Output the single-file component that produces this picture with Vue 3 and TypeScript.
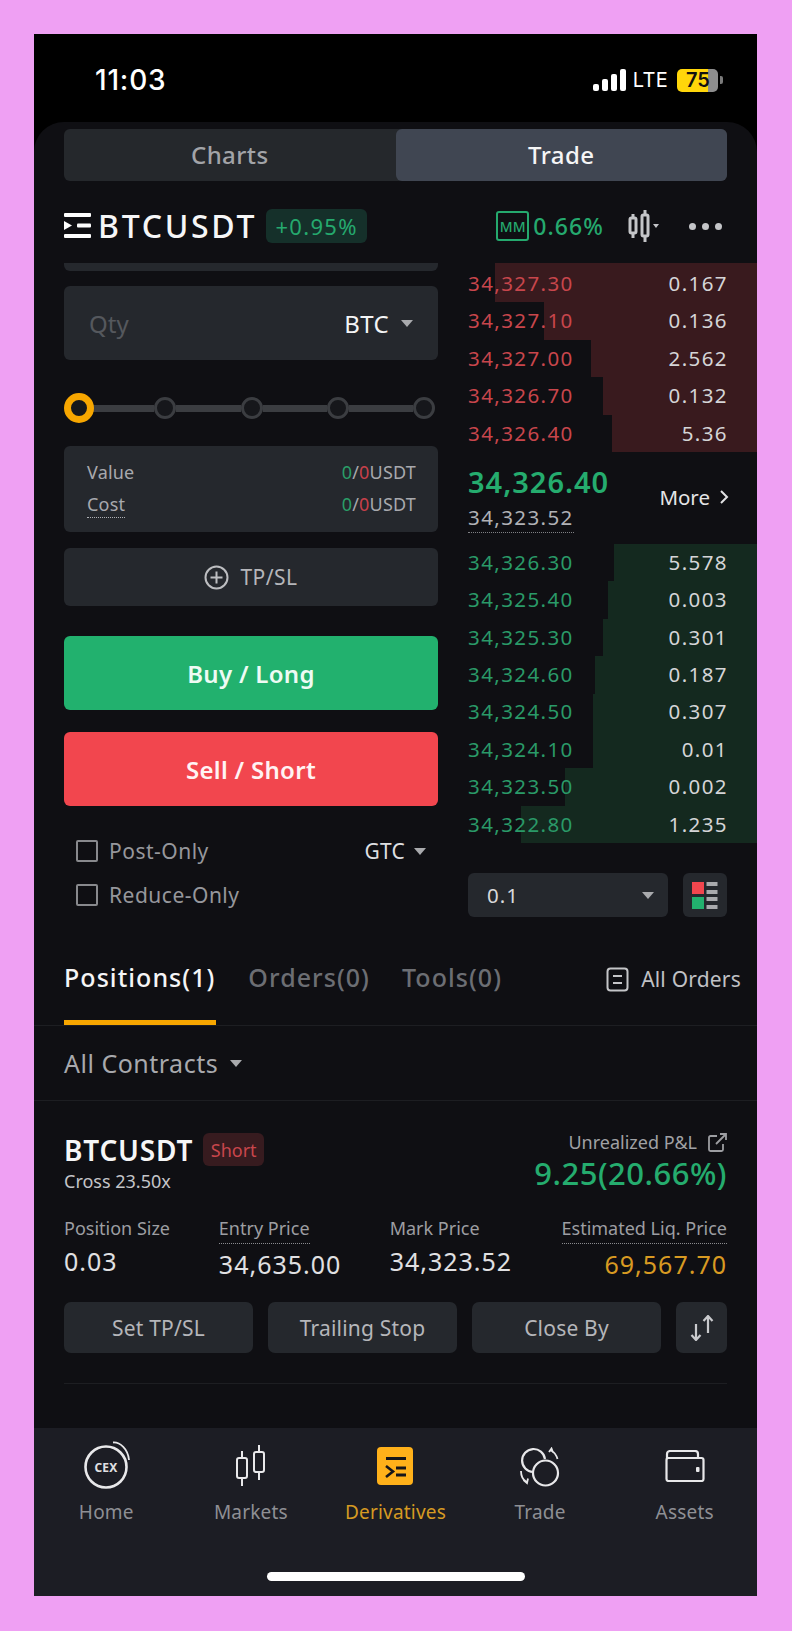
<script setup lang="ts">
interface Row { price: string; qty: string; bar: number }
const asks: Row[] = [
  { price: '34,327.30', qty: '0.167', bar: 262 },
  { price: '34,327.10', qty: '0.136', bar: 213 },
  { price: '34,327.00', qty: '2.562', bar: 166 },
  { price: '34,326.70', qty: '0.132', bar: 154 },
  { price: '34,326.40', qty: '5.36', bar: 145 },
]
const bids: Row[] = [
  { price: '34,326.30', qty: '5.578', bar: 143 },
  { price: '34,325.40', qty: '0.003', bar: 149 },
  { price: '34,325.30', qty: '0.301', bar: 154 },
  { price: '34,324.60', qty: '0.187', bar: 162 },
  { price: '34,324.50', qty: '0.307', bar: 164 },
  { price: '34,324.10', qty: '0.01', bar: 164 },
  { price: '34,323.50', qty: '0.002', bar: 192 },
  { price: '34,322.80', qty: '1.235', bar: 236 },
]
const stops = [0, 1, 2, 3]
</script>

<template>
  <div class="page">
    <div class="frame">
      <div class="status">
        <span class="time">11:03</span>
        <div class="status-right">
          <div class="signal"><i class="b1"></i><i class="b2"></i><i class="b3"></i><i class="b4"></i></div>
          <span class="lte">LTE</span>
          <div class="battery"><span>75</span></div>
          <i class="nub"></i>
        </div>
      </div>

      <div class="panel">
        <div class="seg">
          <div class="seg-item">Charts</div>
          <div class="seg-item on">Trade</div>
        </div>

        <div class="head">
          <svg class="menu" width="28" height="26" viewBox="0 0 28 26">
            <rect x="0" y="0" width="27" height="4" rx="1" fill="#fff" />
            <rect x="0" y="21" width="27" height="4" rx="1" fill="#fff" />
            <rect x="13" y="10.5" width="14" height="4" rx="1" fill="#fff" />
            <path d="M0 8 L8 12.5 L0 17 Z" fill="#fff" />
          </svg>
          <span class="symbol">BTCUSDT</span>
          <span class="change">+0.95%</span>
          <div class="head-right">
            <span class="mm">MM</span>
            <span class="mm-val">0.66%</span>
            <svg class="candles" width="34" height="32" viewBox="0 0 34 32">
              <g fill="none" stroke="#c4c5c8" stroke-width="3">
                <rect x="2" y="8" width="6" height="15" rx="1.5" />
                <path d="M5 4v4M5 23v5" />
                <rect x="14" y="5" width="6" height="21" rx="1.5" />
                <path d="M17 0v5M17 26v6" />
              </g>
              <path d="M25 14h6l-3 4z" fill="#c4c5c8" />
            </svg>
            <div class="dots"><i></i><i></i><i></i></div>
          </div>
        </div>

        <div class="trade">
          <div class="form">
            <div class="stub"></div>
            <div class="qty">
              <span class="qty-ph">Qty</span>
              <span class="qty-unit">BTC<i class="caret"></i></span>
            </div>
            <div class="slider">
              <span class="knob"></span>
              <template v-for="s in stops" :key="s">
                <span class="track"></span>
                <span class="stop"></span>
              </template>
            </div>
            <div class="info">
              <div class="info-row">
                <span>Value</span>
                <span><em class="g">0</em>/<em class="r">0</em>USDT</span>
              </div>
              <div class="info-row">
                <span class="dotted">Cost</span>
                <span><em class="g">0</em>/<em class="r">0</em>USDT</span>
              </div>
            </div>
            <div class="tpsl">
              <svg width="25" height="25" viewBox="0 0 25 25" fill="none" stroke="#bdbec1" stroke-width="2">
                <circle cx="12.5" cy="12.5" r="11" />
                <path d="M12.5 6.5v12M6.5 12.5h12" />
              </svg>
              <span>TP/SL</span>
            </div>
            <div class="action buy">Buy / Long</div>
            <div class="action sell">Sell / Short</div>
            <div class="checks">
              <div class="check-row">
                <i class="box"></i><span>Post-Only</span>
                <span class="gtc">GTC<i class="caret"></i></span>
              </div>
              <div class="check-row">
                <i class="box"></i><span>Reduce-Only</span>
              </div>
            </div>
          </div>

          <div class="book">
            <div v-for="r in asks" :key="r.price" class="row ask">
              <i class="bar" :style="{ width: r.bar + 'px' }"></i>
              <span class="price">{{ r.price }}</span>
              <span class="size">{{ r.qty }}</span>
            </div>
            <div class="mid">
              <div class="mid-left">
                <div class="last">34,326.40</div>
                <div class="mark">34,323.52</div>
              </div>
              <div class="more">
                More
                <svg width="10" height="16" viewBox="0 0 10 16" fill="none" stroke="#e2e2e4" stroke-width="2">
                  <path d="M2 2l6 6-6 6" />
                </svg>
              </div>
            </div>
            <div v-for="r in bids" :key="r.price" class="row bid">
              <i class="bar" :style="{ width: r.bar + 'px' }"></i>
              <span class="price">{{ r.price }}</span>
              <span class="size">{{ r.qty }}</span>
            </div>
            <div class="book-tools">
              <div class="depth">
                <span>0.1</span>
                <i class="caret"></i>
              </div>
              <div class="layout-btn">
                <svg width="26" height="27" viewBox="0 0 26 27">
                  <rect x="0" y="0" width="12" height="12" fill="#f2464e" />
                  <rect x="0" y="15" width="12" height="12" fill="#22b16e" />
                  <g fill="#a9aaad">
                    <rect x="14.500" y="0" width="11" height="4" />
                    <rect x="14.500" y="8" width="11" height="4" />
                    <rect x="14.500" y="15" width="11" height="4" />
                    <rect x="14.500" y="23" width="11" height="4" />
                  </g>
                </svg>
              </div>
            </div>
          </div>
        </div>

        <div class="tabs">
          <div class="tab on">Positions(1)</div>
          <div class="tab">Orders(0)</div>
          <div class="tab">Tools(0)</div>
          <div class="all-orders">
            <svg width="23" height="25" viewBox="0 0 23 25" fill="none" stroke="#c4c5c8" stroke-width="2">
              <rect x="1.500" y="1.500" width="20" height="22" rx="3" />
              <path d="M7 9h9M7 16h9" />
            </svg>
            <span>All Orders</span>
          </div>
        </div>

        <div class="filter">All Contracts<i class="caret"></i></div>

        <div class="position">
          <div class="pos-top">
            <div>
              <div class="pos-name">
                <span class="pos-symbol">BTCUSDT</span>
                <span class="short">Short</span>
              </div>
              <div class="cross">Cross 23.50x</div>
            </div>
            <div class="pnl">
              <div class="pnl-label">
                <span>Unrealized P&amp;L</span>
                <svg width="19" height="19" viewBox="0 0 19 19" fill="none" stroke="#9d9ea2" stroke-width="1.800">
                  <path d="M9 3H2.500A1.500 1.500 0 0 0 1 4.500v12A1.500 1.500 0 0 0 2.500 18h11a1.500 1.500 0 0 0 1.500-1.500V11" />
                  <path d="M8 11L18 1M12 1h6v6" />
                </svg>
              </div>
              <div class="pnl-val">9.25(20.66%)</div>
            </div>
          </div>

          <div class="stats">
            <div class="stat s1">
              <span class="stat-label">Position Size</span>
              <span class="stat-val">0.03</span>
            </div>
            <div class="stat s2">
              <span class="stat-label dotted-s">Entry Price</span>
              <span class="stat-val">34,635.00</span>
            </div>
            <div class="stat s3">
              <span class="stat-label">Mark Price</span>
              <span class="stat-val">34,323.52</span>
            </div>
            <div class="stat s4">
              <span class="stat-label dotted-s">Estimated Liq. Price</span>
              <span class="stat-val orange">69,567.70</span>
            </div>
          </div>

          <div class="pos-actions">
            <div class="pa">Set TP/SL</div>
            <div class="pa">Trailing Stop</div>
            <div class="pa">Close By</div>
            <div class="pa swap">
              <svg width="24" height="26" viewBox="0 0 24 26" fill="none" stroke="#c9cacd" stroke-width="2.200">
                <path d="M6 9v16M1.500 20l4.500 5 4.500-5" />
                <path d="M18 18V1M13.500 6L18 1l4.500 5" />
              </svg>
            </div>
          </div>
          <div class="pos-line"></div>
        </div>

        <nav class="nav">
          <div class="nav-item">
            <div class="nav-icon">
              <svg width="52" height="48" viewBox="0 0 52 48" fill="none" stroke="#e8e8ea">
                <circle cx="26" cy="26" r="20.500" stroke-width="2.600" />
                <path d="M33 1.500C40 1 48 8 49 19" stroke-width="1.800" />
                <text x="26" y="31" text-anchor="middle" class="cex">CEX</text>
              </svg>
            </div>
            <span>Home</span>
          </div>
          <div class="nav-item">
            <div class="nav-icon ic-mk">
              <svg width="30" height="44" viewBox="0 0 30 44" fill="none" stroke="#e8e8ea" stroke-width="2">
                <rect x="1" y="14" width="10" height="20" rx="2" />
                <path d="M6 7v7M6 34v8" />
                <rect x="18" y="8" width="10" height="20" rx="2" />
                <path d="M23 1v7M23 28v8" />
              </svg>
            </div>
            <span>Markets</span>
          </div>
          <div class="nav-item active">
            <div class="nav-icon ic-de">
              <svg width="36" height="38" viewBox="0 0 36 38">
                <rect width="36" height="38" rx="4" fill="#ffb11a" />
                <g stroke="#16161a" stroke-width="3" fill="none">
                  <path d="M9 11.500h20" />
                  <path d="M9 19l7 5.500-7 5.500" stroke-width="2.600" />
                  <path d="M19 21h10M19 28h10" />
                </g>
              </svg>
            </div>
            <span>Derivatives</span>
          </div>
          <div class="nav-item">
            <div class="nav-icon ic-tr">
              <svg width="40" height="40" viewBox="0 0 40 40" fill="none" stroke="#e8e8ea" stroke-width="2.200">
                <circle cx="25.500" cy="26" r="12.500" />
                <path d="M13 25A11.500 11.500 0 1 1 25 12" />
                <path d="M1 24c0 5 2 9 5.500 11M3.500 33l3.500 3 1-4.500" stroke-width="1.800" />
                <path d="M31 3.500c3 1.500 5.500 5 6.500 8.500M29 5l2.500-3.500 1.500 4" stroke-width="1.800" />
              </svg>
            </div>
            <span>Trade</span>
          </div>
          <div class="nav-item">
            <div class="nav-icon ic-as">
              <svg width="40" height="32" viewBox="0 0 40 32" fill="none" stroke="#e8e8ea" stroke-width="2.200">
                <path d="M2 9V4a3 3 0 0 1 3-3h25a3 3 0 0 1 3 3v5" />
                <rect x="1.500" y="8" width="37" height="23" rx="2" />
                <rect x="31" y="17" width="3.500" height="5" rx="1" fill="#e8e8ea" stroke="none" />
              </svg>
            </div>
            <span>Assets</span>
          </div>
          <i class="home-bar"></i>
        </nav>
      </div>
    </div>
  </div>
</template>

<style>
html, body { margin: 0; background: #efa0f3; }
</style>

<style scoped>
.page {
  width: 792px;
  height: 1631px;
  box-sizing: border-box;
  padding: 34px 35px 35px 34px;
  background: #efa0f3;
  font-family: "Noto Sans", "Open Sans", sans-serif;
  overflow: hidden;
}
i, em { font-style: normal; display: inline-block; }
.frame {
  height: 1562px;
  background: #000;
  display: flex;
  flex-direction: column;
}
.status {
  height: 88px;
  flex: none;
  display: flex;
  align-items: center;
  justify-content: space-between;
  box-sizing: border-box;
  padding: 4px 34px 0 61px;
  color: #fff;
}
.time { font-family: Inter, sans-serif; font-size: 28px; font-weight: 500; letter-spacing: .8px; }
.status-right { display: flex; align-items: center; }
.signal { display: flex; align-items: flex-end; gap: 3px; height: 22px; margin-right: 7px; }
.signal i { width: 6px; background: #fff; border-radius: 2px; }
.b1 { height: 7px; }
.b2 { height: 12px; }
.b3 { height: 17px; }
.b4 { height: 22px; }
.lte { font-family: Inter, sans-serif; font-size: 20px; font-weight: 400; margin-right: 9px; letter-spacing: .3px; }
.battery {
  width: 41px;
  height: 23px;
  border-radius: 5px;
  background: linear-gradient(90deg, #ffd60a 0 31px, #8e8e8e 31px);
  color: #111;
  font-family: Inter, sans-serif;
  font-size: 20px;
  font-weight: 600;
  line-height: 23px;
  box-sizing: border-box;
  padding-left: 9px;
}
.nub { width: 3px; height: 8px; background: #7a7a7a; border-radius: 0 2px 2px 0; margin-left: 2px; }

.panel {
  flex: 1;
  display: flex;
  flex-direction: column;
  background: #0f0f13;
  border-radius: 30px 30px 0 0;
  padding-top: 7px;
  min-height: 0;
}
.seg {
  display: flex;
  height: 52px;
  margin: 0 30px;
  background: #25282c;
  border-radius: 6px;
  flex: none;
}
.seg-item {
  flex: 1;
  display: flex;
  align-items: center;
  justify-content: center;
  font-size: 24px;
  font-weight: 500;
  letter-spacing: .4px;
  color: #a2a4a8;
  border-radius: 6px;
  padding-bottom: 2px;
}
.seg-item.on { background: #404652; color: #f5f5f6; }

.head {
  height: 82px;
  flex: none;
  box-sizing: border-box;
  padding: 8px 35px 0 30px;
  display: flex;
  align-items: center;
}
.menu { flex: none; margin-right: 6px; }
.symbol { font-size: 32px; font-weight: 500; color: #f6f6f7; letter-spacing: 2.700px; line-height: 34px; }
.change {
  margin-left: 9px;
  height: 34px;
  width: 101px;
  display: flex;
  align-items: center;
  justify-content: center;
  border-radius: 6px;
  background: #15302a;
  color: #25a96e;
  font-size: 22px;
  letter-spacing: 1.300px;
}
.head-right { margin-left: auto; display: flex; align-items: center; }
.mm {
  width: 33px;
  height: 30px;
  box-sizing: border-box;
  border: 2px solid #25a96e;
  border-radius: 3px;
  color: #25a96e;
  font-size: 14px;
  font-weight: 500;
  display: flex;
  align-items: center;
  justify-content: center;
}
.mm-val { color: #25a96e; font-size: 23px; font-weight: 500; margin-left: 4px; letter-spacing: 1.100px; }
.candles { margin-left: 24px; }
.dots { margin-left: 27px; display: flex; gap: 6px; }
.dots i { width: 7px; height: 7px; border-radius: 50%; background: #c4c5c8; }

.trade {
  display: flex;
  flex: none;
  padding-left: 30px;
  gap: 30px;
}
.form { width: 374px; flex: none; }
.stub { height: 8px; background: #25282d; border-radius: 0 0 6px 6px; margin-bottom: 15px; }
.qty {
  height: 74px;
  background: #25282d;
  border-radius: 6px;
  display: flex;
  align-items: center;
  justify-content: space-between;
  padding: 0 25px;
  font-size: 24px;
}
.qty-ph { color: #55585d; }
.qty-unit { color: #f4f4f5; display: flex; align-items: center; font-size: 24px; letter-spacing: .4px; }
.caret {
  width: 0;
  height: 0;
  border-left: 6px solid transparent;
  border-right: 6px solid transparent;
  border-top: 7px solid #a9aaad;
  margin-left: 12px;
}
.slider {
  height: 30px;
  margin: 33px 0 23px;
  padding-right: 3px;
  display: flex;
  align-items: center;
}
.knob {
  width: 30px;
  height: 30px;
  box-sizing: border-box;
  border: 7px solid #f7a600;
  border-radius: 50%;
  background: #16171b;
  flex: none;
  margin-right: -4px;
  position: relative;
}
.track { flex: 1; height: 7px; background: #3b3d41; }
.stop {
  width: 22px;
  height: 22px;
  box-sizing: border-box;
  border: 3px solid #3b3d41;
  border-radius: 50%;
  background: #16171b;
  flex: none;
}
.info {
  height: 86px;
  box-sizing: border-box;
  background: #25282d;
  border-radius: 6px;
  padding: 10px 22px 0 23px;
  color: #a8a9ad;
  font-size: 18px;
}
.info-row { display: flex; justify-content: space-between; height: 32px; align-items: center; letter-spacing: .2px; }
.g { color: #2a9d68; }
.r { color: #c8404a; }
.dotted { border-bottom: 1px dotted #b0b1b5; line-height: 25px; margin-top: 2px; }
.tpsl {
  height: 58px;
  margin-top: 16px;
  background: #25282d;
  border-radius: 6px;
  display: flex;
  align-items: center;
  justify-content: center;
  gap: 11px;
  color: #b5b6ba;
  font-size: 21px;
  letter-spacing: .5px;
}
.action {
  height: 74px;
  border-radius: 6px;
  display: flex;
  align-items: center;
  justify-content: center;
  color: #fff;
  font-size: 24px;
  font-weight: 600;
  letter-spacing: .3px;
}
.buy { background: #22b16e; margin-top: 30px; color: #eefbf4; }
.sell { background: #f2464e; margin-top: 22px; color: #fff3f3; }
.checks { margin-top: 34px; padding: 0 12px; display: flex; flex-direction: column; gap: 22px; }
.check-row {
  height: 22px;
  display: flex;
  align-items: center;
  color: #96979c;
  font-size: 21px;
  letter-spacing: .5px;
}
.box {
  width: 22px;
  height: 22px;
  box-sizing: border-box;
  border: 2px solid #88898d;
  border-radius: 2px;
  margin-right: 11px;
}
.gtc { margin-left: auto; color: #dedfe1; display: flex; align-items: center; letter-spacing: .2px; }
.gtc .caret { margin-left: 9px; }

.book { flex: 1; min-width: 0; }
.row {
  height: 37.400px;
  position: relative;
  display: flex;
  align-items: center;
  justify-content: space-between;
  box-sizing: border-box;
  padding: 0 29px 1.500px 0;
  font-size: 20.500px;
  letter-spacing: 1.400px;
}
.ask:first-child { height: 39.400px; padding-top: 2px; }
.bar { position: absolute; right: 0; top: 0; bottom: 0; }
.ask .bar { background: #391a1e; }
.bid .bar { background: #14291f; }
.price, .size { position: relative; }
.ask .price { color: #c8464c; }
.bid .price { color: #2a9a68; }
.size { color: #d5d5d7; }
.mid {
  height: 92px;
  display: flex;
  justify-content: space-between;
  padding: 0 28px 2px 0;
  box-sizing: border-box;
}
.mid-left { display: flex; flex-direction: column; align-items: flex-start; }
.last {
  color: #25ac6e;
  font-size: 29px;
  font-weight: 600;
  letter-spacing: 1px;
  line-height: 34px;
  margin-top: 13px;
}
.mark {
  color: #b1b2b6;
  font-size: 20.500px;
  letter-spacing: 1.400px;
  line-height: 30px;
  border-bottom: 1px dotted #7f8084;
  margin-top: 3px;
}
.more {
  display: flex;
  align-items: center;
  gap: 9px;
  color: #e4e4e6;
  font-size: 20.500px;
  white-space: nowrap;
}
.book-tools {
  display: flex;
  justify-content: space-between;
  margin-top: 30px;
  padding-right: 30px;
}
.depth {
  width: 200px;
  height: 44px;
  background: #25282d;
  border-radius: 6px;
  display: flex;
  align-items: center;
  justify-content: space-between;
  box-sizing: border-box;
  padding: 0 14px 0 19px;
  color: #d9d9db;
  font-size: 20.500px;
  letter-spacing: 1px;
}
.layout-btn {
  width: 44px;
  height: 44px;
  background: #25282d;
  border-radius: 6px;
  display: flex;
  align-items: center;
  justify-content: center;
}

.tabs {
  height: 109px;
  flex: none;
  box-sizing: border-box;
  padding: 0 16px 0 30px;
  border-bottom: 1px solid #1d1e22;
  display: flex;
  align-items: flex-start;
  gap: 32px;
}
.tab {
  height: 103px;
  box-sizing: border-box;
  padding: 44px 0 0;
  font-size: 25px;
  font-weight: 500;
  letter-spacing: 1.050px;
  color: #6c6e73;
  line-height: 32px;
}
.tab.on {
  color: #f5f5f6;
  border-bottom: 5px solid #f7a600;
  height: 108px;
  padding-right: 1px;
}
.all-orders {
  margin-left: auto;
  padding-top: 48px;
  display: flex;
  align-items: center;
  gap: 12px;
  color: #c0c1c5;
  font-size: 21px;
  letter-spacing: .2px;
}
.filter {
  height: 75px;
  flex: none;
  box-sizing: border-box;
  padding-left: 30px;
  border-bottom: 1px solid #1d1e22;
  display: flex;
  align-items: center;
  color: #a8a9ad;
  font-size: 25px;
  letter-spacing: .5px;
}
.position { padding: 32px 30px 0; }
.pos-top { display: flex; justify-content: space-between; }
.pos-name { display: flex; align-items: center; gap: 10px; height: 33px; }
.pos-symbol { font-size: 28px; font-weight: 600; color: #f6f6f7; letter-spacing: .8px; }
.short {
  width: 61px;
  height: 33px;
  display: flex;
  align-items: center;
  justify-content: center;
  background: #371b1f;
  border-radius: 6px;
  color: #c8464c;
  font-size: 18px;
}
.cross { color: #c4c5c8; font-size: 18px; line-height: 24px; margin-top: 3px; }
.pnl { text-align: right; margin-top: -3px; }
.pnl-label {
  display: flex;
  justify-content: flex-end;
  align-items: center;
  gap: 11px;
  color: #a0a1a5;
  font-size: 18px;
  line-height: 24px;
}
.pnl-val { color: #25ac6e; font-size: 31px; font-weight: 500; letter-spacing: .5px; line-height: 40px; margin-top: -1px; }
.stats { display: flex; margin-top: 22px; height: 68px; }
.stat { display: flex; flex-direction: column; align-items: flex-start; white-space: nowrap; }
.s1 { width: 155px; }
.s2 { width: 171px; }
.s3 { width: 172px; }
.s4 { flex: 1; align-items: flex-end; }
.stat-label { color: #9d9ea2; font-size: 18px; line-height: 26px; height: 28px; }
.dotted-s { border-bottom: 1px dotted #8a8b8f; }
.stat-val { color: #e0e0e2; font-size: 25px; letter-spacing: 1px; line-height: 30px; margin-top: 3px; }
.s2 .stat-val, .s4 .stat-val { margin-top: 5px; }
.orange { color: #d89a22; }
.pos-actions { display: flex; gap: 15px; margin-top: 19px; }
.pa {
  flex: 1;
  height: 51px;
  background: #25282d;
  border-radius: 7px;
  display: flex;
  align-items: center;
  justify-content: center;
  color: #b5b6ba;
  font-size: 21px;
  letter-spacing: .2px;
}
.pa.swap { flex: none; width: 51px; }
.pos-line { height: 1px; background: #1d1e22; margin-top: 30px; }

.nav {
  margin-top: auto;
  height: 168px;
  flex: none;
  background: #1c1d24;
  display: grid;
  grid-template-columns: repeat(5, 1fr);
  position: relative;
}
.nav-item {
  display: flex;
  flex-direction: column;
  align-items: center;
  color: #8e8f94;
  font-size: 19px;
  letter-spacing: .2px;
  line-height: 26px;
}
.nav-item.active { color: #d69a22; }
.nav-icon {
  height: 71px;
  display: flex;
  align-items: flex-end;
  justify-content: center;
  box-sizing: border-box;
  padding-bottom: 10px;
}
.nav-icon.ic-mk { padding-bottom: 11px; }
.nav-icon.ic-de { padding-bottom: 14px; }
.nav-icon.ic-tr { padding-bottom: 12px; }
.nav-icon.ic-as { padding-bottom: 17px; }
.cex { font-family: "Noto Sans", sans-serif; font-size: 12px; font-weight: 700; fill: #e0e0e2; stroke: none; }
.home-bar {
  position: absolute;
  left: 233px;
  bottom: 15px;
  width: 258px;
  height: 9px;
  border-radius: 5px;
  background: #fff;
}
</style>
